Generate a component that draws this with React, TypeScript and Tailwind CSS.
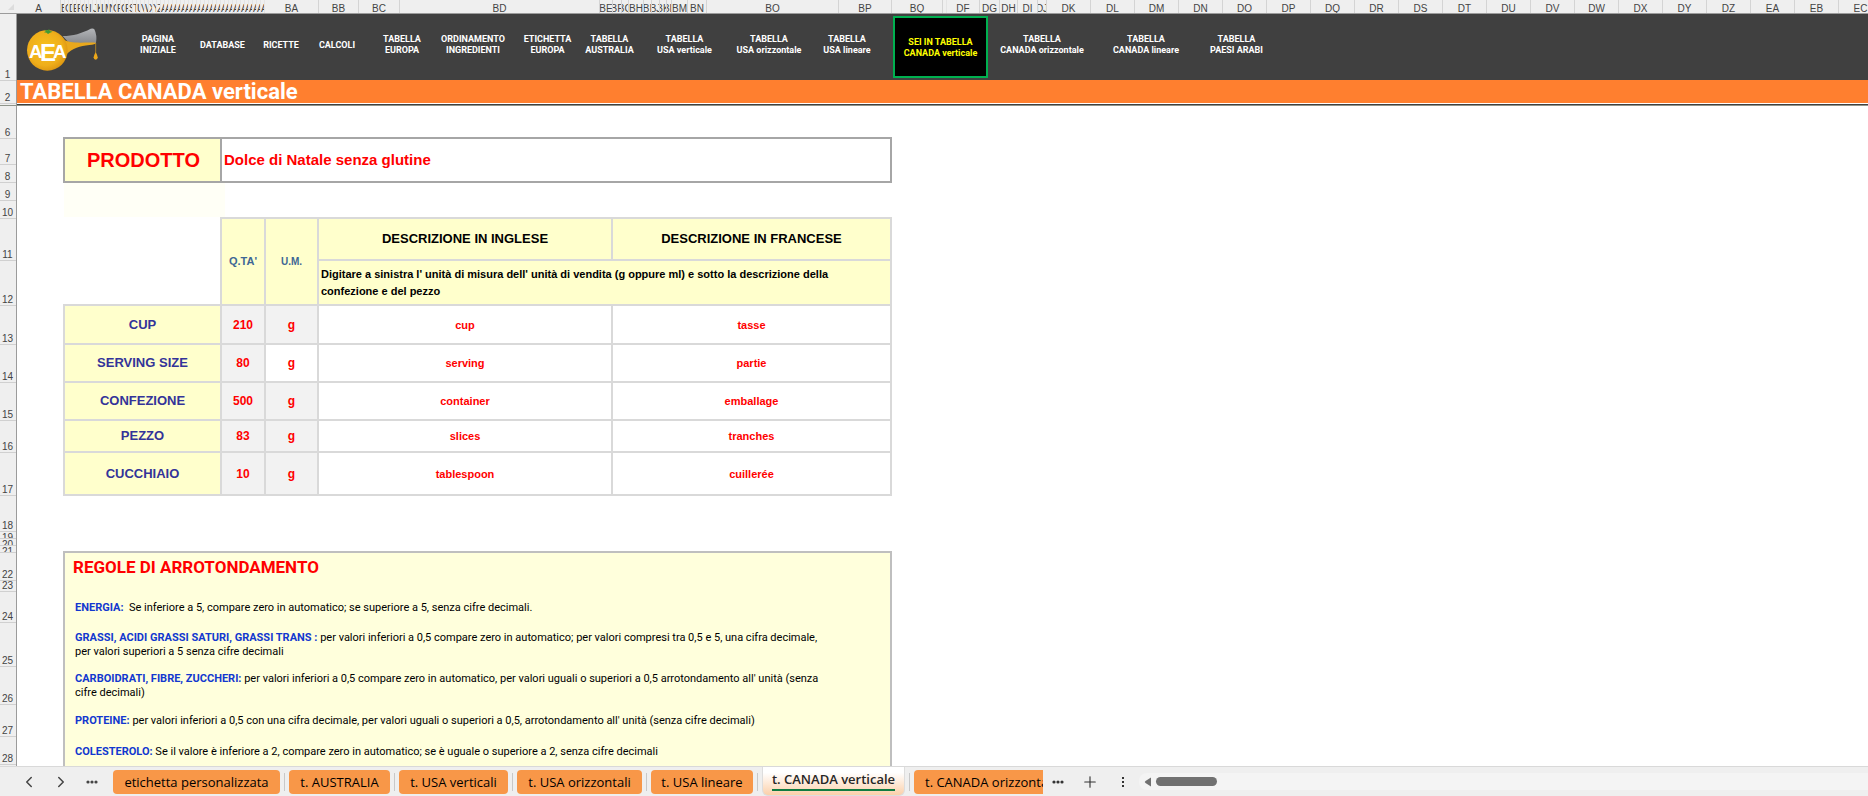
import React from 'react';
import { ChevronLeft, ChevronRight, Plus } from 'lucide-react';
import clsx from 'clsx';

interface SheetColumn {
  name: string;
  width: number;
}

// B..Z and AA..AZ are shrunk to slivers in this sheet
const letters = 'ABCDEFGHIJKLMNOPQRSTUVWXYZ'.split('');
const narrowColumns: SheetColumn[] = [
  ...letters.slice(1),
  ...letters.map(letter => `A${letter}`),
].map(name => ({ name, width: 4 }));

const columns: SheetColumn[] = [
  { name: 'A', width: 44 },
  ...narrowColumns,
  { name: 'BA', width: 54 },
  { name: 'BB', width: 40 },
  { name: 'BC', width: 41 },
  { name: 'BD', width: 200 },
  { name: 'BE', width: 13 },
  { name: 'BF', width: 9 },
  { name: 'BG', width: 7 },
  { name: 'BH', width: 15 },
  { name: 'BI', width: 8 },
  { name: 'BJ', width: 8 },
  { name: 'BK', width: 7 },
  { name: 'BL', width: 5 },
  { name: 'BM', width: 16 },
  { name: 'BN', width: 19 },
  { name: 'BO', width: 132 },
  { name: 'BP', width: 53 },
  { name: 'BQ', width: 51 },
  { name: '', width: 4 },
  { name: 'DF', width: 33 },
  { name: 'DG', width: 20 },
  { name: 'DH', width: 18 },
  { name: 'DI', width: 20 },
  { name: 'DJ', width: 9 },
  ...['DK', 'DL', 'DM', 'DN', 'DO', 'DP', 'DQ', 'DR', 'DS', 'DT', 'DU', 'DV', 'DW', 'DX', 'DY', 'DZ', 'EA', 'EB', 'EC'].map(
    name => ({ name, width: 44 })
  ),
];

const rowHeaders = [
  { name: 6, height: 33 },
  { name: 7, height: 26 },
  { name: 8, height: 18 },
  { name: 9, height: 18 },
  { name: 10, height: 18 },
  { name: 11, height: 42 },
  { name: 12, height: 45 },
  { name: 13, height: 39 },
  { name: 14, height: 38 },
  { name: 15, height: 38 },
  { name: 16, height: 32 },
  { name: 17, height: 43 },
  { name: 18, height: 36 },
  { name: 19, height: 7 },
  { name: 20, height: 7 },
  { name: 21, height: 7 },
  { name: 22, height: 28 },
  { name: 23, height: 11 },
  { name: 24, height: 31 },
  { name: 25, height: 44 },
  { name: 26, height: 38 },
  { name: 27, height: 32 },
  { name: 28, height: 28 },
];

const navItems = [
  { lines: ['PAGINA', 'INIZIALE'], className: 'w-[66px]' },
  { lines: ['DATABASE'], className: 'w-[63px]' },
  { lines: ['RICETTE'], className: 'w-[54px]' },
  { lines: ['CALCOLI'], className: 'w-[58px]' },
  { lines: ['TABELLA', 'EUROPA'], className: 'w-[72px]' },
  { lines: ['ORDINAMENTO', 'INGREDIENTI'], className: 'w-[70px]' },
  { lines: ['ETICHETTA', 'EUROPA'], className: 'w-[79px]' },
  { lines: ['TABELLA', 'AUSTRALIA'], className: 'w-[45px]' },
  { lines: ['TABELLA', 'USA verticale'], className: 'w-[105px]' },
  { lines: ['TABELLA', 'USA orizzontale'], className: 'w-[64px]' },
  { lines: ['TABELLA', 'USA lineare'], className: 'w-[92px]' },
  { lines: ['SEI IN TABELLA', 'CANADA verticale'], className: 'w-[95px]', current: true },
  { lines: ['TABELLA', 'CANADA orizzontale'], className: 'w-[108px]' },
  { lines: ['TABELLA', 'CANADA lineare'], className: 'w-[100px]' },
  { lines: ['TABELLA', 'PAESI ARABI'], className: 'w-[81px]' },
];

const portions = [
  { label: 'CUP', qty: 210, english: 'cup', french: 'tasse', height: 'h-[39px]' },
  { label: 'SERVING SIZE', qty: 80, english: 'serving', french: 'partie', height: 'h-[38px]', whiteUnit: true },
  { label: 'CONFEZIONE', qty: 500, english: 'container', french: 'emballage', height: 'h-[38px]' },
  { label: 'PEZZO', qty: 83, english: 'slices', french: 'tranches', height: 'h-[32px]' },
  { label: 'CUCCHIAIO', qty: 10, english: 'tablespoon', french: 'cuillerée', height: 'h-[43px]' },
];

const rules = [
  {
    label: 'ENERGIA:',
    lines: ['\u00a0Se inferiore a 5, compare zero in automatico; se superiore a 5, senza cifre decimali.'],
    height: 'h-[31px]',
  },
  {
    label: 'GRASSI, ACIDI GRASSI SATURI, GRASSI TRANS :',
    lines: [
      'per valori inferiori a 0,5 compare zero in automatico; per valori compresi tra 0,5 e 5, una cifra decimale,',
      'per valori superiori a 5 senza cifre decimali',
    ],
    height: 'h-[44px]',
  },
  {
    label: 'CARBOIDRATI, FIBRE, ZUCCHERI:',
    lines: [
      "per valori inferiori a 0,5 compare zero in automatico, per valori uguali o superiori a 0,5 arrotondamento all' unità (senza",
      'cifre decimali)',
    ],
    height: 'h-[38px]',
  },
  {
    label: 'PROTEINE:',
    lines: ["per valori inferiori a 0,5 con una cifra decimale, per valori uguali o superiori a 0,5, arrotondamento all' unità (senza cifre decimali)"],
    height: 'h-[32px]',
  },
  {
    label: 'COLESTEROLO:',
    lines: ['Se il valore è inferiore a 2, compare zero in automatico; se è uguale o superiore a 2, senza cifre decimali'],
    height: 'h-[29px]',
  },
];

const sheetTabs = [
  { name: 'etichetta personalizzata', className: 'w-[167px]' },
  { name: 't. AUSTRALIA', className: 'w-[101px]' },
  { name: 't. USA verticali', className: 'w-[109px]' },
  { name: 't. USA orizzontali', className: 'w-[125px]' },
  { name: 't. USA lineare', className: 'w-[102px]' },
];

function Logo() {
  return (
    <svg width="90" height="55" viewBox="0 0 270 165" aria-label="AEA" className="shrink-0">
      <defs>
        <radialGradient id="orange" cx="45%" cy="45%" r="60%">
          <stop offset="0" stopColor="#f7c21c" />
          <stop offset="0.7" stopColor="#efae1b" />
          <stop offset="1" stopColor="#d9920f" />
        </radialGradient>
        <linearGradient id="glass" x1="0" y1="0" x2="0" y2="1">
          <stop offset="0" stopColor="#b4b6b9" />
          <stop offset="1" stopColor="#85878b" />
        </linearGradient>
      </defs>
      <path d="M128 42 C160 42 185 34 212 20 Q220 18 223 22 Q232 40 228 63 L150 66 Z" fill="url(#glass)" />
      <path d="M130 52 C150 66 180 61 228 62 Q226 68 208 69 C180 72 158 78 138 98 Z" fill="#e9a81c" />
      <circle cx="82" cy="85" r="61" fill="url(#orange)" />
      <path d="M72 31 L78 27 L73 23 L82 25 L88 22 L89 27 L98 29 L90 32 L84 36 L80 32 Z" fill="#3f9a35" />
      <path d="M227 63 V92" stroke="#d79a1c" strokeWidth="2" />
      <path d="M227 90 Q233 101 233 106 A6 7 0 0 1 221 106 Q221 101 227 90 Z" fill="#eda81b" />
      <text fill="#fff" fontFamily="Liberation Sans Narrow, Liberation Sans, sans-serif" fontWeight="700" fontSize="56">
        <tspan x="27" y="108">A</tspan>
        <tspan x="60" y="118" fontSize="72">E</tspan>
        <tspan x="99" y="108">A</tspan>
      </text>
    </svg>
  );
}

function RowHeader({ name, height }: { name: number; height: number }) {
  return (
    <div
      className="flex shrink-0 flex-col justify-end overflow-hidden border-b border-[#d0d0d0] pl-[2px] text-[10px] leading-[10px] text-[#444444]"
      style={{ height }}
    >
      <span className={clsx('w-[11px] text-center', height < 10 && 'h-[5px]')}>{name}</span>
    </div>
  );
}

function TabSeparator() {
  return <span className="mx-1 h-[18px] w-px shrink-0 bg-[#c8c8c8]" />;
}

export default function App() {
  return (
    <div className="flex h-screen flex-col overflow-hidden bg-white font-['Liberation_Sans',Arial,sans-serif] text-black">
      {/* Column headers */}
      <div className="flex h-[14px] shrink-0 overflow-hidden border-b border-[#9b9b9b] bg-[#efefef]">
        <div className="flex w-[17px] shrink-0 items-end justify-end pr-[3px] pb-[3px]">
          <svg width="6" height="6" viewBox="0 0 6 6">
            <path d="M6 0 V6 H0 Z" fill="#dcdcdc" />
          </svg>
        </div>
        {columns.map((column, index) => (
          <div
            key={index}
            className={clsx(
              'flex shrink-0 items-end overflow-hidden border-r text-[10px] leading-[9px] text-[#444444]',
              column.width < 5 ? 'justify-start border-[#e4e4e4]' : 'justify-center border-[#d4d4d4]'
            )}
            style={{ width: column.width }}
          >
            {column.name}
          </div>
        ))}
      </div>

      {/* Frozen rows */}
      <header className="flex shrink-0 border-b border-[#8f948b]">
        <div className="flex w-[17px] shrink-0 flex-col border-r border-[#9b9b9b] bg-[#efefef]">
          <RowHeader name={1} height={67} />
          <RowHeader name={2} height={23} />
        </div>
        <div className="min-w-0 flex-1 border-b border-[#404040]">
          <div className="flex h-[66px] bg-[#404040]">
            <div className="flex w-[108px] shrink-0 items-start pt-2 pl-[3px]">
              <Logo />
            </div>
            <nav className="flex items-center font-[Roboto,sans-serif] text-[9px] leading-[11px] font-bold text-white">
              {navItems.map(item => (
                <a
                  key={item.lines.join(' ')}
                  href="#"
                  className={clsx(
                    'flex shrink-0 flex-col items-center justify-center whitespace-nowrap',
                    item.className,
                    item.current ? 'h-[62px] border-2 border-[#00b050] bg-black pt-px text-[#ffff00]' : 'h-full pb-1'
                  )}
                >
                  {item.lines.map(line => (
                    <span key={line}>{line}</span>
                  ))}
                </a>
              ))}
            </nav>
          </div>
          <h1 className="mb-px h-[23px] bg-[#ff7f2f] pl-[3px] font-[Roboto,sans-serif] text-[22px] leading-6 font-bold text-white">
            TABELLA CANADA verticale
          </h1>
        </div>
      </header>

      {/* Sheet */}
      <div className="flex min-h-0 flex-1 overflow-hidden">
        <div className="flex w-[17px] shrink-0 flex-col border-r border-[#9b9b9b] bg-[#efefef]">
          {rowHeaders.map(row => (
            <RowHeader key={row.name} name={row.name} height={row.height} />
          ))}
        </div>

        <main className="w-[875px] shrink-0 pt-[31px] pl-[46px]">
          <table className="h-[46px] w-full table-fixed border-collapse font-bold text-[#ff0000]">
            <tbody>
              <tr>
                <th className="w-[157px] border-2 border-[#a6a6a6] bg-[#ffffcc] pl-[2px] text-[20px] leading-6">PRODOTTO</th>
                <td className="border-2 border-[#a6a6a6] pl-[2px] text-[15px] leading-6">Dolce di Natale senza glutine</td>
              </tr>
            </tbody>
          </table>
          <div className="ml-px h-[34px] w-[161px] bg-[#fffff6]" />

          <table className="w-full table-fixed border-collapse text-center font-bold">
            <colgroup>
              <col className="w-[157px]" />
              <col className="w-[44px]" />
              <col className="w-[53px]" />
              <col className="w-[294px]" />
              <col />
            </colgroup>
            <thead>
              <tr className="h-[42px]">
                <td rowSpan={2} />
                <th rowSpan={2} className="border-2 border-[#d9d9d9] bg-[#ffffcc] text-[11px] text-[#3d6695]">Q.TA'</th>
                <th rowSpan={2} className="border-2 border-[#d9d9d9] bg-[#ffffcc] text-[10px] text-[#3d6695]">U.M.</th>
                <th className="border-2 border-[#d9d9d9] bg-[#ffffcc] text-[13px]">DESCRIZIONE IN INGLESE</th>
                <th className="border-2 border-[#d9d9d9] bg-[#ffffcc] text-[13px]">DESCRIZIONE IN FRANCESE</th>
              </tr>
              <tr className="h-[45px]">
                <th colSpan={2} className="border-2 border-[#d9d9d9] bg-[#ffffcc] pl-[2px] text-left text-[11px] leading-[17px]">
                  Digitare a sinistra l' unità di misura dell' unità di vendita (g oppure ml) e sotto la descrizione della
                  <br />
                  confezione e del pezzo
                </th>
              </tr>
            </thead>
            <tbody className="text-[#ff0000]">
              {portions.map(portion => (
                <tr key={portion.label} className={portion.height}>
                  <th className="border-2 border-[#d9d9d9] bg-[#ffffcc] text-[13px] leading-4 text-[#333399]">{portion.label}</th>
                  <td className="border-2 border-[#d9d9d9] bg-[#f2f2f2] text-[12px] leading-4">{portion.qty}</td>
                  <td
                    className={clsx(
                      'border-2 border-[#d9d9d9] text-[12px] leading-4',
                      portion.whiteUnit ? 'bg-white' : 'bg-[#f2f2f2]'
                    )}
                  >
                    g
                  </td>
                  <td className="border-2 border-[#d9d9d9] text-[11px] leading-4">{portion.english}</td>
                  <td className="border-2 border-[#d9d9d9] text-[11px] leading-4">{portion.french}</td>
                </tr>
              ))}
            </tbody>
          </table>

          <section className="mt-[55px] border-x-2 border-t-2 border-[#bfbfbf] bg-[#ffffdc] font-[Roboto,sans-serif]">
            <h2 className="h-[39px] pt-[2px] pl-2 text-[17px] leading-6 font-bold text-[#ff0000]">REGOLE DI ARROTONDAMENTO</h2>
            {rules.map(rule => (
              <div key={rule.label} className={clsx('flex flex-col justify-center pl-[10px] text-[11px] leading-[14px]', rule.height)}>
                <p className="whitespace-nowrap">
                  <strong className="font-bold text-[#1238cf]">{rule.label}</strong> {rule.lines[0]}
                </p>
                {rule.lines[1] && <p>{rule.lines[1]}</p>}
              </div>
            ))}
          </section>
        </main>
      </div>

      {/* Sheet tabs */}
      <footer className="flex h-[30px] shrink-0 items-center border-t border-[#d9d9d9] bg-[#efefef] font-['Open_Sans',sans-serif] text-[13px] leading-5">
        <div className="flex w-[113px] shrink-0 items-center pl-5 text-[#444444]">
          <button type="button" aria-label="Foglio precedente" className="w-8">
            <ChevronLeft size={18} strokeWidth={2} />
          </button>
          <button type="button" aria-label="Foglio successivo" className="w-[34px]">
            <ChevronRight size={18} strokeWidth={2} />
          </button>
          <button type="button" aria-label="Altri fogli">
            <svg width="12" height="4" viewBox="0 0 12 4" fill="currentColor">
              <circle cx="2" cy="2" r="1.6" />
              <circle cx="6" cy="2" r="1.6" />
              <circle cx="10" cy="2" r="1.6" />
            </svg>
          </button>
        </div>
        {sheetTabs.map(tab => (
          <React.Fragment key={tab.name}>
            <button type="button" className={clsx('h-6 shrink-0 rounded bg-[#f89748] whitespace-nowrap', tab.className)}>
              {tab.name}
            </button>
            <TabSeparator />
          </React.Fragment>
        ))}
        <button
          type="button"
          className="flex h-[29px] w-[143px] shrink-0 justify-center self-start rounded-b-md border-x border-b border-[#dddddd] bg-linear-to-b from-white from-20% to-[#fbd0aa] font-semibold text-[#262626]"
        >
          <span className="mt-[2px] h-[22px] border-b-2 border-[#107c41] whitespace-nowrap">t. CANADA verticale</span>
        </button>
        <TabSeparator />
        <button type="button" className="h-6 w-[129px] shrink-0 overflow-hidden rounded-l bg-[#f89748] pl-[11px] text-left whitespace-nowrap">
          t. CANADA orizzontale
        </button>
        <div className="flex w-[96px] shrink-0 items-center pl-[9px] text-[#333333]">
          <button type="button" aria-label="Altre schede">
            <svg width="12" height="4" viewBox="0 0 12 4" fill="currentColor">
              <circle cx="2" cy="2" r="1.6" />
              <circle cx="6" cy="2" r="1.6" />
              <circle cx="10" cy="2" r="1.6" />
            </svg>
          </button>
          <button type="button" aria-label="Nuovo foglio" className="ml-[17px]">
            <Plus size={18} strokeWidth={1.5} />
          </button>
          <button type="button" aria-label="Opzioni" className="ml-[22px]">
            <svg width="4" height="12" viewBox="0 0 4 12" fill="currentColor">
              <rect x="1" y="1" width="2" height="2" />
              <rect x="1" y="5" width="2" height="2" />
              <rect x="1" y="9" width="2" height="2" />
            </svg>
          </button>
        </div>
        <div className="flex h-[17px] min-w-0 flex-1 items-center gap-1 rounded-l-lg bg-[#f4f4f4] pl-[5px]">
          <svg width="8" height="10" viewBox="0 0 8 10">
            <path d="M7 0.5 V9.5 L1.5 6 Q0 5 1.5 4 Z" fill="#717171" />
          </svg>
          <div className="h-[9px] w-[61px] rounded-full bg-[#717171]" />
        </div>
      </footer>
    </div>
  );
}
